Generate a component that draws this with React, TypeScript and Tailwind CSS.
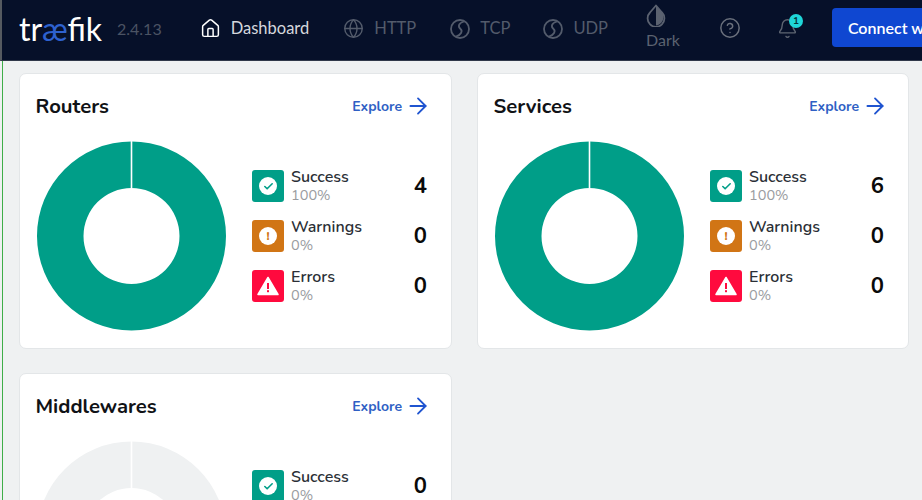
import React from 'react';
import { House, Globe, CircleHelp, Bell, ArrowRight, Check } from 'lucide-react';

const body = "font-['Nunito','Lato','Noto_Sans',sans-serif]";

const BallIcon = () => (
  <svg width="20" height="20" viewBox="0 0 20 20" fill="none" stroke="currentColor" strokeWidth="1.8">
    <circle cx="10" cy="10" r="9" />
    <path d="M14 2.5C8 4 8 8 10.5 10 13 12 11 16 6 17.5" />
  </svg>
);

const DarkIcon = () => (
  <svg width="20" height="23" viewBox="0 0 20 23">
    <path d="M10 1.5 4 8.5a8.4 8.4 0 1 0 12 0Z" fill="none" stroke="currentColor" strokeWidth="1.8" strokeLinejoin="round" />
    <path d="M10 1.5V21.5a8.4 8.4 0 0 0 6-13Z" fill="currentColor" />
  </svg>
);

const navItems = [
  { label: 'HTTP', icon: <Globe size={21} strokeWidth={1.6} />, className: 'ml-[34px]' },
  { label: 'TCP', icon: <BallIcon />, className: 'ml-[34px]' },
  { label: 'UDP', icon: <BallIcon />, className: 'ml-[33px]' },
];

const Donut = ({ color }: { color: string }) => (
  <svg width="190" height="190" viewBox="0 0 190 190" className="shrink-0">
    <path
      fillRule="evenodd"
      fill={color}
      d="M95.5 .5a94.5 94.5 0 1 0 0 189a94.5 94.5 0 1 0 0-189ZM95.5 47a48 48 0 1 1 0 96a48 48 0 1 1 0-96Z"
    />
    <rect x="94.7" y="0" width="1.6" height="47" fill="#fff" />
  </svg>
);

const SuccessIcon = () => (
  <div className="flex h-[32px] w-[32px] shrink-0 items-center justify-center rounded-[3px] bg-[#009e88]">
    <div className="flex h-[18px] w-[18px] items-center justify-center rounded-full bg-white">
      <Check size={11} strokeWidth={3.5} className="text-[#009e88]" />
    </div>
  </div>
);

const WarningIcon = () => (
  <div className="flex h-[32px] w-[32px] shrink-0 items-center justify-center rounded-[3px] bg-[#d17515]">
    <div className="flex h-[18px] w-[18px] items-center justify-center rounded-full bg-white text-[12px] font-extrabold leading-none text-[#d17515]">
      !
    </div>
  </div>
);

const ErrorIcon = () => (
  <div className="flex h-[32px] w-[32px] shrink-0 items-center justify-center rounded-[3px] bg-[#ff0a3e]">
    <svg width="22" height="20" viewBox="0 0 22 20">
      <path d="M11 1.5 21 18.5H1Z" fill="#fff" stroke="#fff" strokeWidth="1.5" strokeLinejoin="round" />
      <rect x="10" y="7" width="2" height="6" fill="#ff0a3e" />
      <rect x="10" y="14.2" width="2" height="2" fill="#ff0a3e" />
    </svg>
  </div>
);

type Stat = { label: string; pct: string; value: number; icon: React.ReactNode };

const StatRow = ({ label, pct, value, icon }: Stat) => (
  <div className="flex h-[32px] items-center pr-[8px]">
    {icon}
    <div className="ml-[7px] flex-1">
      <div className="text-[16px] font-semibold leading-[19px] text-[#2b2f36]">{label}</div>
      <div className="-mt-[1px] text-[14.5px] leading-[18px] text-[#9a9c9f]">{pct}</div>
    </div>
    <div className="text-[22px] font-bold leading-none text-[#0a0a0a]">{value}</div>
  </div>
);

const Card = ({ title, stats, color }: { title: string; stats: Stat[]; color: string }) => (
  <div className="h-[276px] rounded-[7px] border border-[#e3e6e8] bg-white px-[16px] pt-[16px]">
    <div className="flex h-[32px] items-center justify-between pr-[4px]">
      <h2 className="-ml-[0.5px] mt-[1px] text-[20.3px] font-bold text-[#101216]">{title}</h2>
      <a className="flex items-center gap-[3px] text-[14px] font-bold text-[#2f5fc4]">
        Explore
        <ArrowRight size={26} strokeWidth={1.7} className="text-[#1f54d0]" />
      </a>
    </div>
    <div className="mt-[19px] flex items-center">
      <Donut color={color} />
      <div className="ml-[26px] flex flex-1 flex-col gap-[18px]">
        {stats.map((s) => (
          <StatRow key={s.label} {...s} />
        ))}
      </div>
    </div>
  </div>
);

const makeStats = (value: number, zero?: boolean): Stat[] => [
  { label: 'Success', pct: zero ? '0%' : '100%', value, icon: <SuccessIcon /> },
  { label: 'Warnings', pct: '0%', value: 0, icon: <WarningIcon /> },
  { label: 'Errors', pct: '0%', value: 0, icon: <ErrorIcon /> },
];

export default function App() {
  return (
    <div className={`flex h-[500px] w-[922px] flex-col overflow-hidden bg-[#eff1f2] ${body}`}>
      <nav className="flex h-[61px] shrink-0 items-center overflow-hidden border-b border-[#30384a] border-l-2 border-l-[#555a60] bg-[#061029] pb-[3px] pl-[17px]">
        <div className="w-[84px] shrink-0 whitespace-nowrap font-['Lato',sans-serif] text-[32px] leading-none text-white">
          tr<span className="text-[#2e62d0]">æ</span>fik
        </div>
        <span className="ml-[14px] font-['Lato',sans-serif] text-[16px] text-[#4b5363]">2.4.13</span>
        <House size={21} strokeWidth={1.7} className="ml-[38px] shrink-0 text-white" />
        <span className="ml-[10px] font-['Lato',sans-serif] text-[16.5px] text-[#d5d8dd]">Dashboard</span>
        {navItems.map((item) => (
          <div key={item.label} className={`flex items-center gap-[10px] text-[#535b6b] ${item.className}`}>
            {item.icon}
            <span className="font-['Lato',sans-serif] text-[16.5px]">{item.label}</span>
          </div>
        ))}
        <div className="-mt-[6px] ml-[38px] flex w-[36px] flex-col items-start text-[#5b6270]">
          <DarkIcon />
          <span className="mt-[5px] font-['Lato',sans-serif] text-[16px] leading-[16px]">Dark</span>
        </div>
        <CircleHelp size={22} strokeWidth={1.6} className="-mt-[2px] ml-[39px] shrink-0 text-[#6a707c]" />
        <div className="relative ml-[36px] shrink-0 text-[#5e6572]">
          <Bell size={21} strokeWidth={1.6} />
          <span className="absolute -right-[5px] -top-[4px] flex h-[14px] w-[14px] items-center justify-center rounded-full bg-[#1fd6d9] text-[10px] font-bold leading-none text-[#05343c]">
            1
          </span>
        </div>
        <button className="-mt-[2px] ml-[34px] h-[39px] w-[120px] shrink-0 rounded-[4px] bg-[#0f47d1] pl-[16px] text-left font-['Lato',sans-serif] text-[16px] font-semibold whitespace-nowrap text-white">
          Connect with
        </button>
      </nav>
      <main className="ml-[2px] grid flex-1 grid-cols-[433px_432px] content-start gap-x-[25px] gap-y-[24px] border-l border-l-[#3fae49] pl-[16px] pt-[12px]">
        <Card title="Routers" stats={makeStats(4)} color="#009e88" />
        <Card title="Services" stats={makeStats(6)} color="#009e88" />
        <Card title="Middlewares" stats={makeStats(0, true)} color="#eff1f2" />
      </main>
    </div>
  );
}
